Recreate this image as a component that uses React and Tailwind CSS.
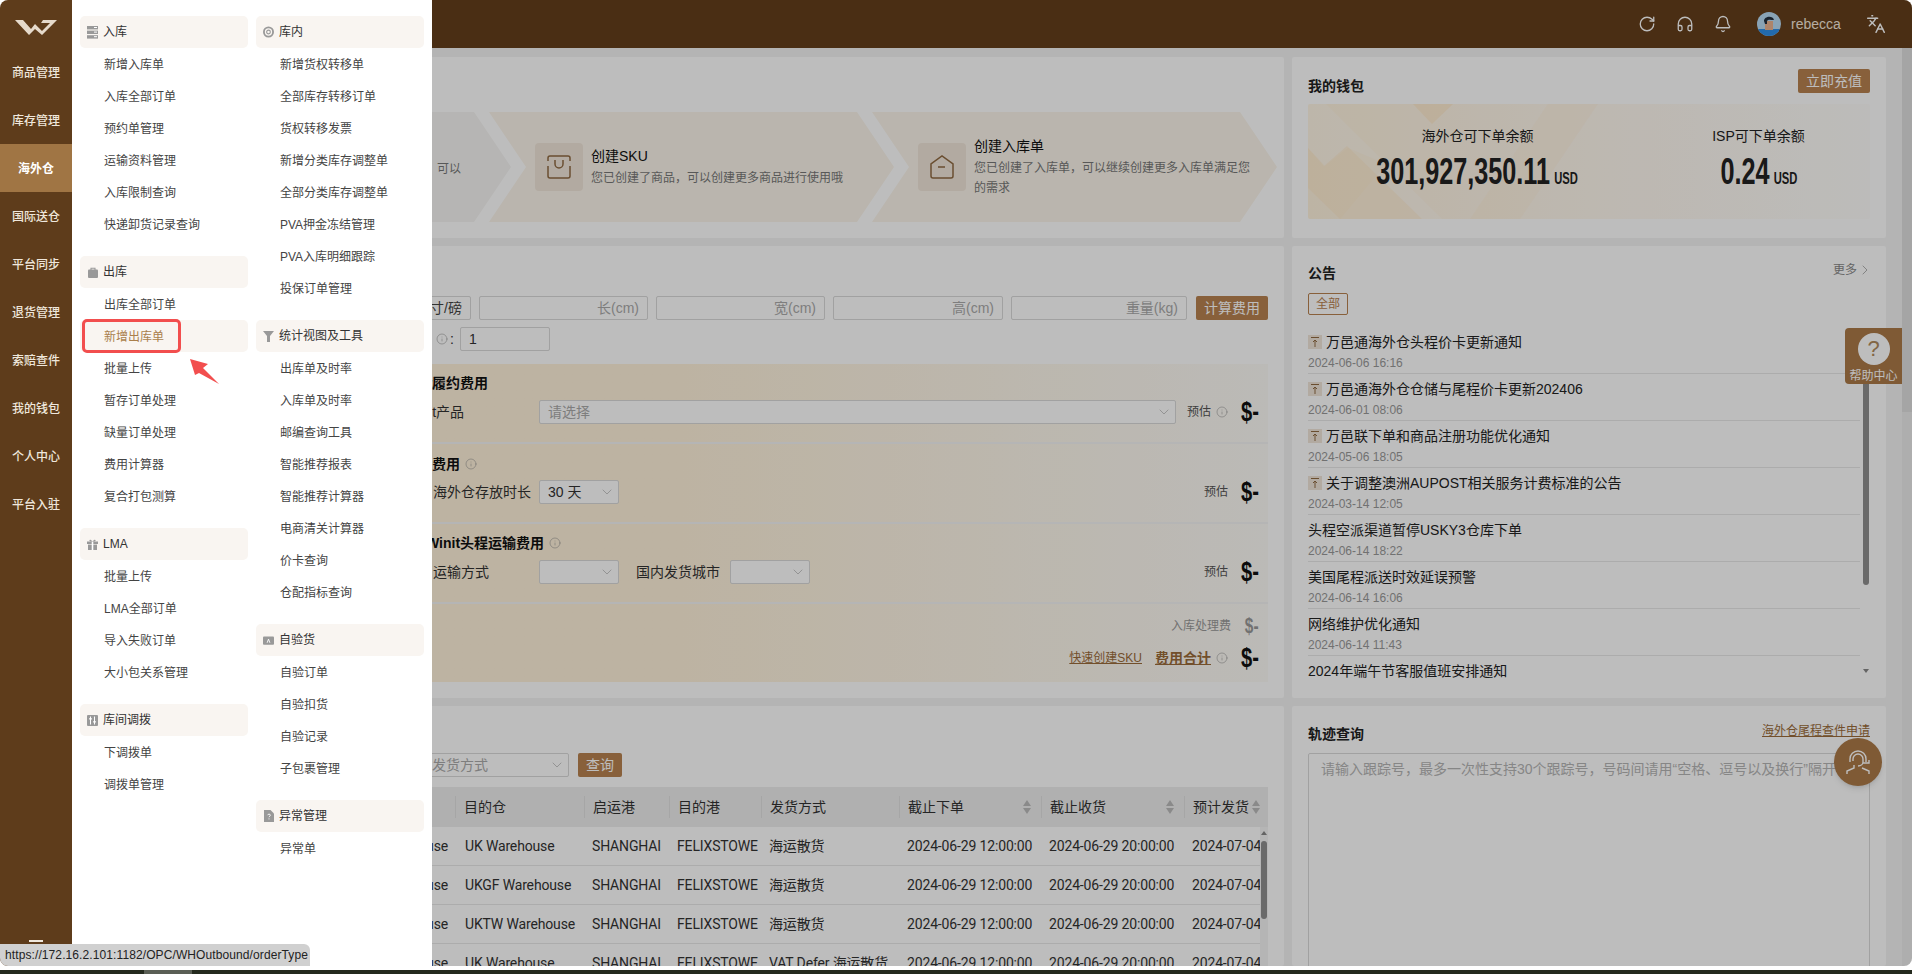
import { Bell, ChevronDown, ChevronRight, Headphones, Info, Languages, RotateCw } from "lucide-react";

const NAV = ["商品管理", "库存管理", "海外仓", "国际送仓", "平台同步", "退货管理", "索赔查件", "我的钱包", "个人中心", "平台入驻"];

function GroupIcon({ name }) {
  const c = "#999999";
  if (name === "server")
    return (
      <svg width="11" height="13" viewBox="0 0 11 13">
        <rect x="0" y="0" width="11" height="3.4" fill={c} />
        <rect x="0" y="4.6" width="11" height="3.4" fill={c} />
        <rect x="0" y="9.2" width="11" height="3.4" fill={c} />
        <rect x="7" y="1" width="3" height="1" fill="#fff" />
        <rect x="7" y="5.6" width="3" height="1" fill="#fff" />
        <rect x="7" y="10.2" width="3" height="1" fill="#fff" />
      </svg>
    );
  if (name === "disc")
    return (
      <svg width="12" height="12" viewBox="0 0 12 12">
        <circle cx="6" cy="6" r="5" fill="none" stroke={c} strokeWidth="2" />
        <circle cx="6" cy="6" r="2" fill="none" stroke={c} strokeWidth="1.2" />
      </svg>
    );
  if (name === "bag")
    return (
      <svg width="10" height="11" viewBox="0 0 10 11">
        <rect x="0" y="2.5" width="10" height="8.5" rx="1" fill={c} />
        <path d="M3 3V1.2h4V3" fill="none" stroke={c} strokeWidth="1.1" />
      </svg>
    );
  if (name === "funnel")
    return (
      <svg width="11" height="11" viewBox="0 0 11 11">
        <path d="M0 0h11L7 5v6H4V5z" fill={c} />
      </svg>
    );
  if (name === "gift")
    return (
      <svg width="11" height="11" viewBox="0 0 11 11">
        <rect x="0" y="2.5" width="11" height="2.5" fill={c} />
        <rect x="1" y="5.6" width="9" height="5.4" fill={c} />
        <rect x="4.7" y="2.5" width="1.6" height="8.5" fill="#fff" />
        <path d="M5.5 2.4C4 .4 2.4.2 2.4 1.4s1.6 1 3.1 1zm0 0C7 .4 8.6.2 8.6 1.4s-1.6 1-3.1 1z" fill={c} />
      </svg>
    );
  if (name === "sliders")
    return (
      <svg width="11" height="11" viewBox="0 0 11 11">
        <rect width="11" height="11" rx="1" fill={c} />
        <path d="M3.5 1.5v8M7.5 1.5v8" stroke="#fff" strokeWidth="1" />
        <rect x="2.3" y="3" width="2.4" height="1.6" fill="#fff" />
        <rect x="6.3" y="6" width="2.4" height="1.6" fill="#fff" />
      </svg>
    );
  if (name === "card")
    return (
      <svg width="12" height="9" viewBox="0 0 12 9">
        <rect width="12" height="9" rx="1" fill={c} />
        <path d="M4.5 7l1.5-4 1.5 4" fill="none" stroke="#fff" strokeWidth="1" />
      </svg>
    );
  return (
    <svg width="10" height="12" viewBox="0 0 10 12">
      <path d="M0 0h6.5L10 3.5V12H0z" fill={c} />
      <path d="M3.6 5.2c.2-1.4 2.8-1.4 2.8 0 0 1-1.4 1-1.4 2M5 8.4v1" fill="none" stroke="#fff" strokeWidth=".9" />
    </svg>
  );
}

const COL1 = [
  { title: "入库", icon: "server", items: ["新增入库单", "入库全部订单", "预约单管理", "运输资料管理", "入库限制查询", "快递卸货记录查询"] },
  { title: "出库", icon: "bag", items: ["出库全部订单", "新增出库单", "批量上传", "暂存订单处理", "缺量订单处理", "费用计算器", "复合打包测算"] },
  { title: "LMA", icon: "gift", items: ["批量上传", "LMA全部订单", "导入失败订单", "大小包关系管理"] },
  { title: "库间调拨", icon: "sliders", items: ["下调拨单", "调拨单管理"] },
];

const COL2 = [
  { title: "库内", icon: "disc", items: ["新增货权转移单", "全部库存转移订单", "货权转移发票", "新增分类库存调整单", "全部分类库存调整单", "PVA押金冻结管理", "PVA入库明细跟踪", "投保订单管理"] },
  { title: "统计视图及工具", icon: "funnel", items: ["出库单及时率", "入库单及时率", "邮编查询工具", "智能推荐报表", "智能推荐计算器", "电商清关计算器", "价卡查询", "仓配指标查询"] },
  { title: "自验货", icon: "card", items: ["自验订单", "自验扣货", "自验记录", "子包裹管理"] },
  { title: "异常管理", icon: "file", items: ["异常单"] },
];

const NOTICES = [
  { top: true, title: "万邑通海外仓头程价卡更新通知", date: "2024-06-06 16:16" },
  { top: true, title: "万邑通海外仓仓储与尾程价卡更新202406", date: "2024-06-01 08:06" },
  { top: true, title: "万邑联下单和商品注册功能优化通知", date: "2024-05-06 18:05" },
  { top: true, title: "关于调整澳洲AUPOST相关服务计费标准的公告", date: "2024-03-14 12:05" },
  { title: "头程空派渠道暂停USKY3仓库下单", date: "2024-06-14 18:22" },
  { title: "美国尾程派送时效延误预警", date: "2024-06-14 16:06" },
  { title: "网络维护优化通知", date: "2024-06-14 11:43" },
  { title: "2024年端午节客服值班安排通知" },
];

const ROWS = [
  ["UK Warehouse", "UK Warehouse", "海运散货"],
  ["UKGF Warehouse", "UKGF Warehouse", "海运散货"],
  ["UKTW Warehouse", "UKTW Warehouse", "海运散货"],
  ["UK Warehouse", "UK Warehouse", "VAT Defer 海运散货"],
];

const COLS = "grid grid-cols-[359px_129px_85px_92px_138px_142px_143px_76px]";

function MenuGroup({ group }) {
  return (
    <div className="mb-4">
      <div className="h-8 flex items-center gap-[5px] pl-[7px] rounded-[5px] bg-[#f9f5f1] text-[#333]">
        <span className="w-[11px] flex justify-center">
          <GroupIcon name={group.icon} />
        </span>
        {group.title}
      </div>
      {group.items.map((item) => (
        <div
          key={item}
          className={
            item === "新增出库单"
              ? "h-8 flex items-center pl-6 pt-[2px] rounded-[5px] bg-[#f9f5f1] text-[#aa7f4c]"
              : "h-8 flex items-center pl-6 pt-[2px] text-[#444]"
          }
        >
          {item}
        </div>
      ))}
    </div>
  );
}

function Caret() {
  return <ChevronDown size={16} strokeWidth={1} className="text-[#aaa] shrink-0" />;
}

function Dollar({ grey, small }) {
  return (
    <span className={`flex justify-end ${small ? "w-[14px]" : "w-[18px]"}`}>
      <span
        className={`inline-block whitespace-nowrap origin-right font-bold leading-[24px] ${
          small ? "text-[22px] scale-x-[0.7]" : "text-[28px] scale-x-[0.72]"
        } ${grey ? "text-[#999]" : "text-[#111]"}`}
      >
        $-
      </span>
    </span>
  );
}

function FeeRight({ info }) {
  return (
    <div className="ml-auto flex items-center pr-[9px] text-xs text-[#555]">
      预估
      {info && <Info size={12} strokeWidth={1} className="ml-[5px] text-[#888]" />}
      <span className="ml-[13px]">
        <Dollar />
      </span>
    </div>
  );
}

function Select({ className, children }) {
  return (
    <div className={`h-6 flex items-center justify-between pl-2 pr-[3px] border border-[#d9d9d9] rounded-[2px] bg-[#fff] text-[#333] shrink-0 ${className}`}>
      <span className="whitespace-nowrap">{children}</span>
      <Caret />
    </div>
  );
}

function NumInput({ className, children }) {
  return (
    <div className={`h-6 flex items-center justify-end pr-2 border border-[#d9d9d9] rounded-[2px] text-[#aaa] ${className}`}>
      {children}
    </div>
  );
}

function Sort() {
  return (
    <svg width="8" height="14" viewBox="0 0 8 14" className="shrink-0">
      <path d="M4 0l4 6H0z" fill="#bbb" />
      <path d="M4 14L0 8h8z" fill="#bbb" />
    </svg>
  );
}

function Chevron({ tone, children }) {
  return (
    <div className={`w-[405px] h-[110px] -ml-[22px] first:ml-0 flex items-center pl-[46px] gap-2 shrink-0 [clip-path:polygon(0_0,calc(100%-37px)_0,100%_50%,calc(100%-37px)_100%,0_100%,37px_50%)] ${tone}`}>
      {children}
    </div>
  );
}

export default function App() {
  return (
    <div className="w-[1912px] h-[974px] overflow-hidden bg-white font-['Liberation_Sans','Noto_Sans_CJK_SC',sans-serif] text-sm">
      <div className="relative h-[966px] flex rounded-[8px] overflow-hidden">
        {/* left nav */}
        <div className="relative z-20 w-[72px] bg-[#5e3c1b] shrink-0">
          <div className="h-12 flex justify-center items-start pt-5">
            <svg width="42" height="15" viewBox="0 0 42 15">
              <path d="M0 0h8l8 9 4-5 7 7 8-8h-9l2-3h14L27 15l-7-6-6 6z" fill="#e6dacb" />
            </svg>
          </div>
          {NAV.map((n) => (
            <div
              key={n}
              className={
                n === "海外仓"
                  ? "h-12 flex items-center justify-center pt-[2px] text-xs font-bold text-white bg-[#a07544]"
                  : "h-12 flex items-center justify-center pt-[2px] text-xs font-medium text-[#efe7dc]"
              }
            >
              {n}
            </div>
          ))}
          <div className="absolute left-[29px] top-[940px] w-[14px] h-[4px] border-t-2 border-[#efe7dc]" />
        </div>

        {/* page behind the mask */}
        <div className="relative flex-1 min-w-0 flex flex-col bg-[#f3f3f3]">
          <div className="h-12 bg-[#643e1b] flex items-center justify-end text-white shrink-0">
            <RotateCw size={18} strokeWidth={1.75} />
            <Headphones size={18} strokeWidth={1.75} className="ml-[20px]" />
            <Bell size={18} strokeWidth={1.75} className="ml-[20px]" />
            <svg width="24" height="24" viewBox="0 0 24 24" className="ml-[25px]">
              <clipPath id="av">
                <circle cx="12" cy="12" r="12" />
              </clipPath>
              <g clipPath="url(#av)">
                <rect width="24" height="24" fill="#b9dcf5" />
                <rect y="17" width="24" height="7" fill="#2f8fe8" />
                <path d="M8 9h8v9H8z" fill="#eab28f" />
                <path d="M7 9c0-5 9-6 10-1-3 0-6-1-7 1v3H8z" fill="#23303f" />
              </g>
            </svg>
            <span className="ml-[10px] w-[52px] text-[#f5e9dc]">rebecca</span>
            <Languages size={20} strokeWidth={1.75} className="ml-[23px] mr-[26px]" />
          </div>

          <div className="flex-1 min-h-0 flex">
            <div className="flex-1 min-w-0 flex gap-2 pl-2 pt-[9px] pr-4">
              {/* left column */}
              <div className="w-[1204px] flex flex-col gap-2 shrink-0">
                <div className="h-[181px] bg-white pt-[55px] pl-[26px] rounded-[2px] shrink-0">
                  <div className="flex">
                    <Chevron tone="bg-[#f6f5f3]">
                      <div className="w-[309px] text-right text-xs text-[#777] pt-1">可以</div>
                    </Chevron>
                    <Chevron tone="bg-[#fbf5eb]">
                      <div className="w-12 h-12 rounded-[4px] bg-[#f1e6da] flex items-center justify-center shrink-0">
                        <svg width="24" height="24" viewBox="0 0 24 24" fill="none" stroke="#8f6a42" strokeWidth="1.5">
                          <path d="M1 6V3a2 2 0 0 1 2-2h18a2 2 0 0 1 2 2v3M1 11v10a2 2 0 0 0 2 2h18a2 2 0 0 0 2-2V11M8 5v4a4 4 0 0 0 8 0V5" />
                        </svg>
                      </div>
                      <div>
                        <div className="text-[#111] leading-[20px]">创建SKU</div>
                        <div className="mt-[2px] text-xs text-[#777] leading-[20px]">您已创建了商品，可以创建更多商品进行使用哦</div>
                      </div>
                    </Chevron>
                    <Chevron tone="bg-[#fbf5eb]">
                      <div className="w-12 h-12 rounded-[4px] bg-[#f1e6da] flex items-center justify-center shrink-0">
                        <svg width="24" height="24" viewBox="0 0 24 24" fill="none" stroke="#8f6a42" strokeWidth="1.5">
                          <path d="M1 21V9L12 1l11 8v12a2 2 0 0 1-2 2H3a2 2 0 0 1-2-2zM8 12h7" />
                        </svg>
                      </div>
                      <div className="w-[278px]">
                        <div className="text-[#111] leading-[20px]">创建入库单</div>
                        <div className="mt-[2px] text-xs text-[#777] leading-[20px]">您已创建了入库单，可以继续创建更多入库单满足您的需求</div>
                      </div>
                    </Chevron>
                  </div>
                </div>

                <div className="h-[452px] bg-white px-4 pt-[50px] rounded-[2px] shrink-0">
                  <div className="flex gap-2 text-[#aaa]">
                    <div className="ml-[204px] w-[171px] h-6 flex items-center justify-end pr-2 border border-[#d9d9d9] rounded-[2px] text-[#444]">英寸/磅</div>
                    <NumInput className="w-[169px]">长(cm)</NumInput>
                    <NumInput className="w-[169px]">宽(cm)</NumInput>
                    <NumInput className="w-[170px]">高(cm)</NumInput>
                    <NumInput className="w-[176px]">重量(kg)</NumInput>
                    <button className="ml-px w-[72px] h-6 rounded-[2px] bg-[#b88250] text-white">计算费用</button>
                  </div>
                  <div className="flex items-center mt-[7px] mb-[13px] h-6">
                    <Info size={12} strokeWidth={1} className="ml-[340px] text-[#888]" />
                    <span className="ml-[2px] text-[#333]">:</span>
                    <div className="ml-[6px] w-[90px] h-6 flex items-center pl-2 border border-[#d9d9d9] rounded-[2px] text-[#333]">1</div>
                  </div>

                  <div className="bg-gradient-to-r from-[#fff2db] via-[#fff2db] to-[#fdfbf7]">
                    <div className="h-20 border-b-2 border-[#f5f5f5] pt-[9px] pl-[302px]">
                      <div className="font-bold text-[#111] leading-[20px] whitespace-nowrap">Winit履约费用</div>
                      <div className="flex items-center mt-[7px] ml-[7px] text-[#333]">
                        <div className="w-[134px] whitespace-nowrap">Winit产品</div>
                        <Select className="w-[637px] text-[#aaa]">
                          <span className="text-[#aaa]">请选择</span>
                        </Select>
                        <FeeRight info />
                      </div>
                    </div>
                    <div className="h-20 border-b-2 border-[#f5f5f5] pt-[10px] pl-[308px]">
                      <div className="flex items-center font-bold text-[#111] leading-[20px] whitespace-nowrap">
                        仓储费用
                        <Info size={12} strokeWidth={1} className="ml-[5px] text-[#888]" />
                      </div>
                      <div className="flex items-center mt-[6px] ml-[29px] text-[#333]">
                        <div className="w-[106px] whitespace-nowrap">海外仓存放时长</div>
                        <Select className="w-20">30 天</Select>
                        <FeeRight />
                      </div>
                    </div>
                    <div className="h-20 border-b-2 border-[#f5f5f5] pt-[9px] pl-[330px]">
                      <div className="flex items-center font-bold text-[#111] leading-[20px] whitespace-nowrap">
                        Winit头程运输费用
                        <Info size={12} strokeWidth={1} className="ml-[5px] text-[#888]" />
                      </div>
                      <div className="flex items-center mt-[7px] ml-[7px] text-[#333]">
                        <div className="w-[106px] whitespace-nowrap">运输方式</div>
                        <Select className="w-20" />
                        <span className="ml-[17px] mr-[10px] whitespace-nowrap">国内发货城市</span>
                        <Select className="w-20" />
                        <FeeRight />
                      </div>
                    </div>
                    <div className="h-[78px] pt-[12px] pr-[9px] flex flex-col items-end">
                      <div className="h-5 flex items-center text-xs text-[#999]">
                        入库处理费
                        <span className="ml-[14px]">
                          <Dollar grey small />
                        </span>
                      </div>
                      <div className="h-6 mt-[10px] flex items-center">
                        <span className="text-xs text-[#9a6b3a] underline">快速创建SKU</span>
                        <span className="ml-[13px] font-bold text-[#9a6b3a] underline">费用合计</span>
                        <Info size={12} strokeWidth={1} className="ml-[5px] text-[#888]" />
                        <span className="ml-[13px]">
                          <Dollar />
                        </span>
                      </div>
                    </div>
                  </div>
                </div>

                <div className="flex-1 min-h-0 bg-white px-4 pt-[47px] rounded-[2px] overflow-hidden">
                  <div className="flex gap-[9px]">
                    <Select className="ml-[200px] w-[273px] justify-between">
                      <span className="text-[#aaa] ml-[127px]">发货方式</span>
                    </Select>
                    <button className="w-11 h-6 rounded-[2px] bg-[#b88250] text-white">查询</button>
                  </div>
                  <div className="mt-[10px]">
                    <div className="flex h-10 bg-[#eeeeee] text-[#333]">
                      <div className={`flex-1 ${COLS} items-center`}>
                        <div />
                        {["目的仓", "启运港", "目的港", "发货方式"].map((h) => (
                          <div key={h} className="h-[22px] flex items-center pl-2 border-l border-[#e0e0e0]">{h}</div>
                        ))}
                        {["截止下单", "截止收货", "预计发货"].map((h) => (
                          <div key={h} className="h-[22px] flex items-center justify-between pl-2 pr-[10px] last:pr-0 border-l border-[#e0e0e0] whitespace-nowrap">
                            {h}
                            <Sort />
                          </div>
                        ))}
                      </div>
                      <div className="w-2" />
                    </div>
                    <div className="flex">
                      <div className="flex-1 min-w-0">
                        {ROWS.map((r, i) => (
                          <div key={i} className={`${COLS} h-[39px] items-center border-b border-[#e8e8e8] text-[#333] whitespace-nowrap font-['Roboto','Noto_Sans_CJK_SC',sans-serif] tracking-[-0.15px]`}>
                            <div className="text-right pr-[7px]">{r[0]}</div>
                            <div className="pl-[10px]">{r[1]}</div>
                            <div className="pl-2">SHANGHAI</div>
                            <div className="pl-2">FELIXSTOWE</div>
                            <div className="pl-2">{r[2]}</div>
                            <div className="pl-2">2024-06-29 12:00:00</div>
                            <div className="pl-2">2024-06-29 20:00:00</div>
                            <div className="pl-2 overflow-hidden">2024-07-04 12:00:00</div>
                          </div>
                        ))}
                      </div>
                      <div className="w-2 bg-[#f5f5f5] flex flex-col items-center pt-[4px]">
                        <svg width="6" height="4" viewBox="0 0 6 4">
                          <path d="M3 0l3 4H0z" fill="#888" />
                        </svg>
                        <div className="mt-[6px] w-[6px] h-[78px] rounded-full bg-[#8f8f8f]" />
                      </div>
                    </div>
                  </div>
                </div>
              </div>

              {/* right column */}
              <div className="w-[594px] flex flex-col gap-2 shrink-0">
                <div className="h-[181px] bg-white px-4 pt-3 rounded-[2px] shrink-0">
                  <div className="flex items-end justify-between h-6">
                    <span className="font-bold text-[#222] leading-[16px] -mb-[1px]">我的钱包</span>
                    <button className="w-[72px] h-6 rounded-[2px] bg-[#b88250] text-white">立即充值</button>
                  </div>
                  <div className="relative mt-[11px] h-[115px] overflow-hidden rounded-[2px] bg-gradient-to-r from-[#fff3de] via-[#fff8ee] to-[#fefdfb] flex pl-[29px]">
                    <svg width="300" height="115" viewBox="0 0 300 115" className="absolute left-0 top-0">
                      <path d="M0 0h18l116 115H32l46-55L40 44 17 62 0 44z" fill="#ffffff" fillOpacity=".25" />
                      <path d="M105 0h40l-21 20z" fill="#ffe6bd" fillOpacity=".5" />
                      <path d="M0 44l16 18 23-20 75 73H32L0 84z" fill="#ffe6bd" fillOpacity=".35" />
                      <path d="M162 115l78-115h50l-78 115z" fill="#ffe6bd" fillOpacity=".15" />
                    </svg>
                    {[
                      ["海外仓可下单余额", "301,927,350.11"],
                      ["ISP可下单余额", "0.24"],
                    ].map(([label, value]) => (
                      <div key={label} className="relative w-[281px] shrink-0 flex flex-col items-center pt-[22px]">
                        <div className="leading-[20px] text-[#222]">{label}</div>
                        <div className="mt-[6px] h-10 whitespace-nowrap scale-x-[0.7] font-bold text-[#222] leading-[40px] text-[36px]">
                          {value}
                          <span className="ml-[6px] text-[16px]">USD</span>
                        </div>
                      </div>
                    ))}
                  </div>
                </div>

                <div className="h-[452px] bg-white px-4 pt-[16px] rounded-[2px] shrink-0">
                  <div className="flex justify-between h-[22px]">
                    <span className="font-bold text-[#222] leading-[22px]">公告</span>
                    <span className="flex items-start text-xs text-[#888] -mr-[3px] leading-[16px]">
                      更多
                      <ChevronRight size={16} strokeWidth={1} />
                    </span>
                  </div>
                  <div className="mt-[9px] w-10 h-[22px] flex items-center justify-center border border-[#b88250] rounded-[2px] text-xs text-[#b88250]">全部</div>
                  <div className="mt-3 h-[354px] flex overflow-hidden">
                    <div className="w-[552px] shrink-0">
                      {NOTICES.map((n) => (
                        <div key={n.title} className="h-[47px] border-b border-[#e8e8e8]">
                          <div className="h-[26px] pt-1 flex items-center text-[#222] whitespace-nowrap">
                            {n.top && (
                              <span className="mr-1 w-[14px] h-[14px] bg-[#f1e6da] flex items-center justify-center shrink-0">
                                <svg width="14" height="14" viewBox="0 0 14 14" fill="none" stroke="#8f6a42" strokeWidth="1">
                                  <path d="M3 2.5h8M7 5v7M5 7l2-2 2 2" />
                                </svg>
                              </span>
                            )}
                            {n.title}
                          </div>
                          {n.date && <div className="h-5 flex items-center text-xs text-[#999]">{n.date}</div>}
                        </div>
                      ))}
                    </div>
                    <div className="ml-[3px] w-[6px] relative">
                      <div className="mt-[10px] h-[248px] rounded-full bg-[#8f8f8f]" />
                      <svg width="6" height="4" viewBox="0 0 6 4" className="mt-[84px]">
                        <path d="M3 4l3-4H0z" fill="#888" />
                      </svg>
                    </div>
                  </div>
                </div>

                <div className="flex-1 min-h-0 bg-white px-4 pt-[16px] rounded-[2px] overflow-hidden">
                  <div className="flex justify-between h-[31px]">
                    <span className="font-bold text-[#222] leading-[24px]">轨迹查询</span>
                    <span className="text-xs text-[#9a6b3a] underline leading-[18px]">海外仓尾程查件申请</span>
                  </div>
                  <textarea
                    readOnly
                    placeholder="请输入跟踪号，最多一次性支持30个跟踪号，号码间请用“空格、逗号以及换行”隔开"
                    className="block w-full h-[260px] px-3 py-[5px] border border-[#d9d9d9] rounded-[2px] outline-none resize-none placeholder:text-[#b5b5b5]"
                  />
                </div>
              </div>
            </div>

            {/* page scrollbar */}
            <div className="w-[10px] bg-[#ebebeb] shrink-0">
              <div className="h-[364px] bg-[#dfdfdf]" />
            </div>
          </div>

          {/* help centre tab */}
          <div className="absolute left-[1773px] top-[328px] w-[57px] h-[56px] rounded-l-[4px] bg-[#ac7a48] flex flex-col items-center pt-[5px]">
            <div className="w-8 h-8 rounded-full bg-white flex items-center justify-center text-[22px] leading-none text-[#b08a5c]">?</div>
            <div className="mt-[3px] text-xs leading-[16px] text-white whitespace-nowrap">帮助中心</div>
          </div>

          {/* customer service bubble */}
          <div className="absolute left-[1762px] top-[738px] w-12 h-12 rounded-full bg-[#ac7a48] flex items-center justify-center shadow-md">
            <svg width="26" height="28" viewBox="0 0 26 28" fill="none" stroke="#fff" strokeWidth="1.4">
              <path d="M5 14V11a8 8 0 0 1 16 0v3" />
              <path d="M8 13V11a5 5 0 0 1 10 0v3c0 2-2 4-5 4M24 12v3h-6" />
              <path d="M9 17v3l-7 3v3M17 20l7 3v3" />
            </svg>
          </div>

          {/* mask */}
          <div className="absolute inset-0 bg-black/[0.26]" />

          {/* mega menu */}
          <div className="absolute left-0 top-0 bottom-0 w-[360px] bg-white pl-2 pt-4 flex gap-2 text-xs">
            <div className="w-[168px]">
              {COL1.map((g) => (
                <MenuGroup key={g.title} group={g} />
              ))}
            </div>
            <div className="w-[168px]">
              {COL2.map((g) => (
                <MenuGroup key={g.title} group={g} />
              ))}
            </div>
            <div className="absolute left-[10px] top-[319px] w-[99px] h-[34px] border-[3px] border-[#f24e4e] rounded-[5px]" />
            <svg width="40" height="34" viewBox="0 0 40 34" className="absolute left-[116px] top-[356px]">
              <path d="M2 3l18 5-5 4 16 16-20-11-4 2z" fill="#f24e4e" />
            </svg>
          </div>
        </div>

        {/* status bubble */}
        <div className="absolute left-0 bottom-0 z-30 w-[310px] h-[22px] pl-[5px] rounded-tr-[6px] bg-[#d0d0d0] flex items-center text-xs tracking-[0.1px] text-[#222] whitespace-nowrap">
          https://172.16.2.101:1182/OPC/WHOutbound/orderType
        </div>
      </div>

      {/* desktop peeking under the window */}
      <div className="h-1" />
      <div className="h-1 bg-[#242a1e] flex">
        <div className="ml-[144px] w-12 bg-[#5a5f55]" />
      </div>
    </div>
  );
}
